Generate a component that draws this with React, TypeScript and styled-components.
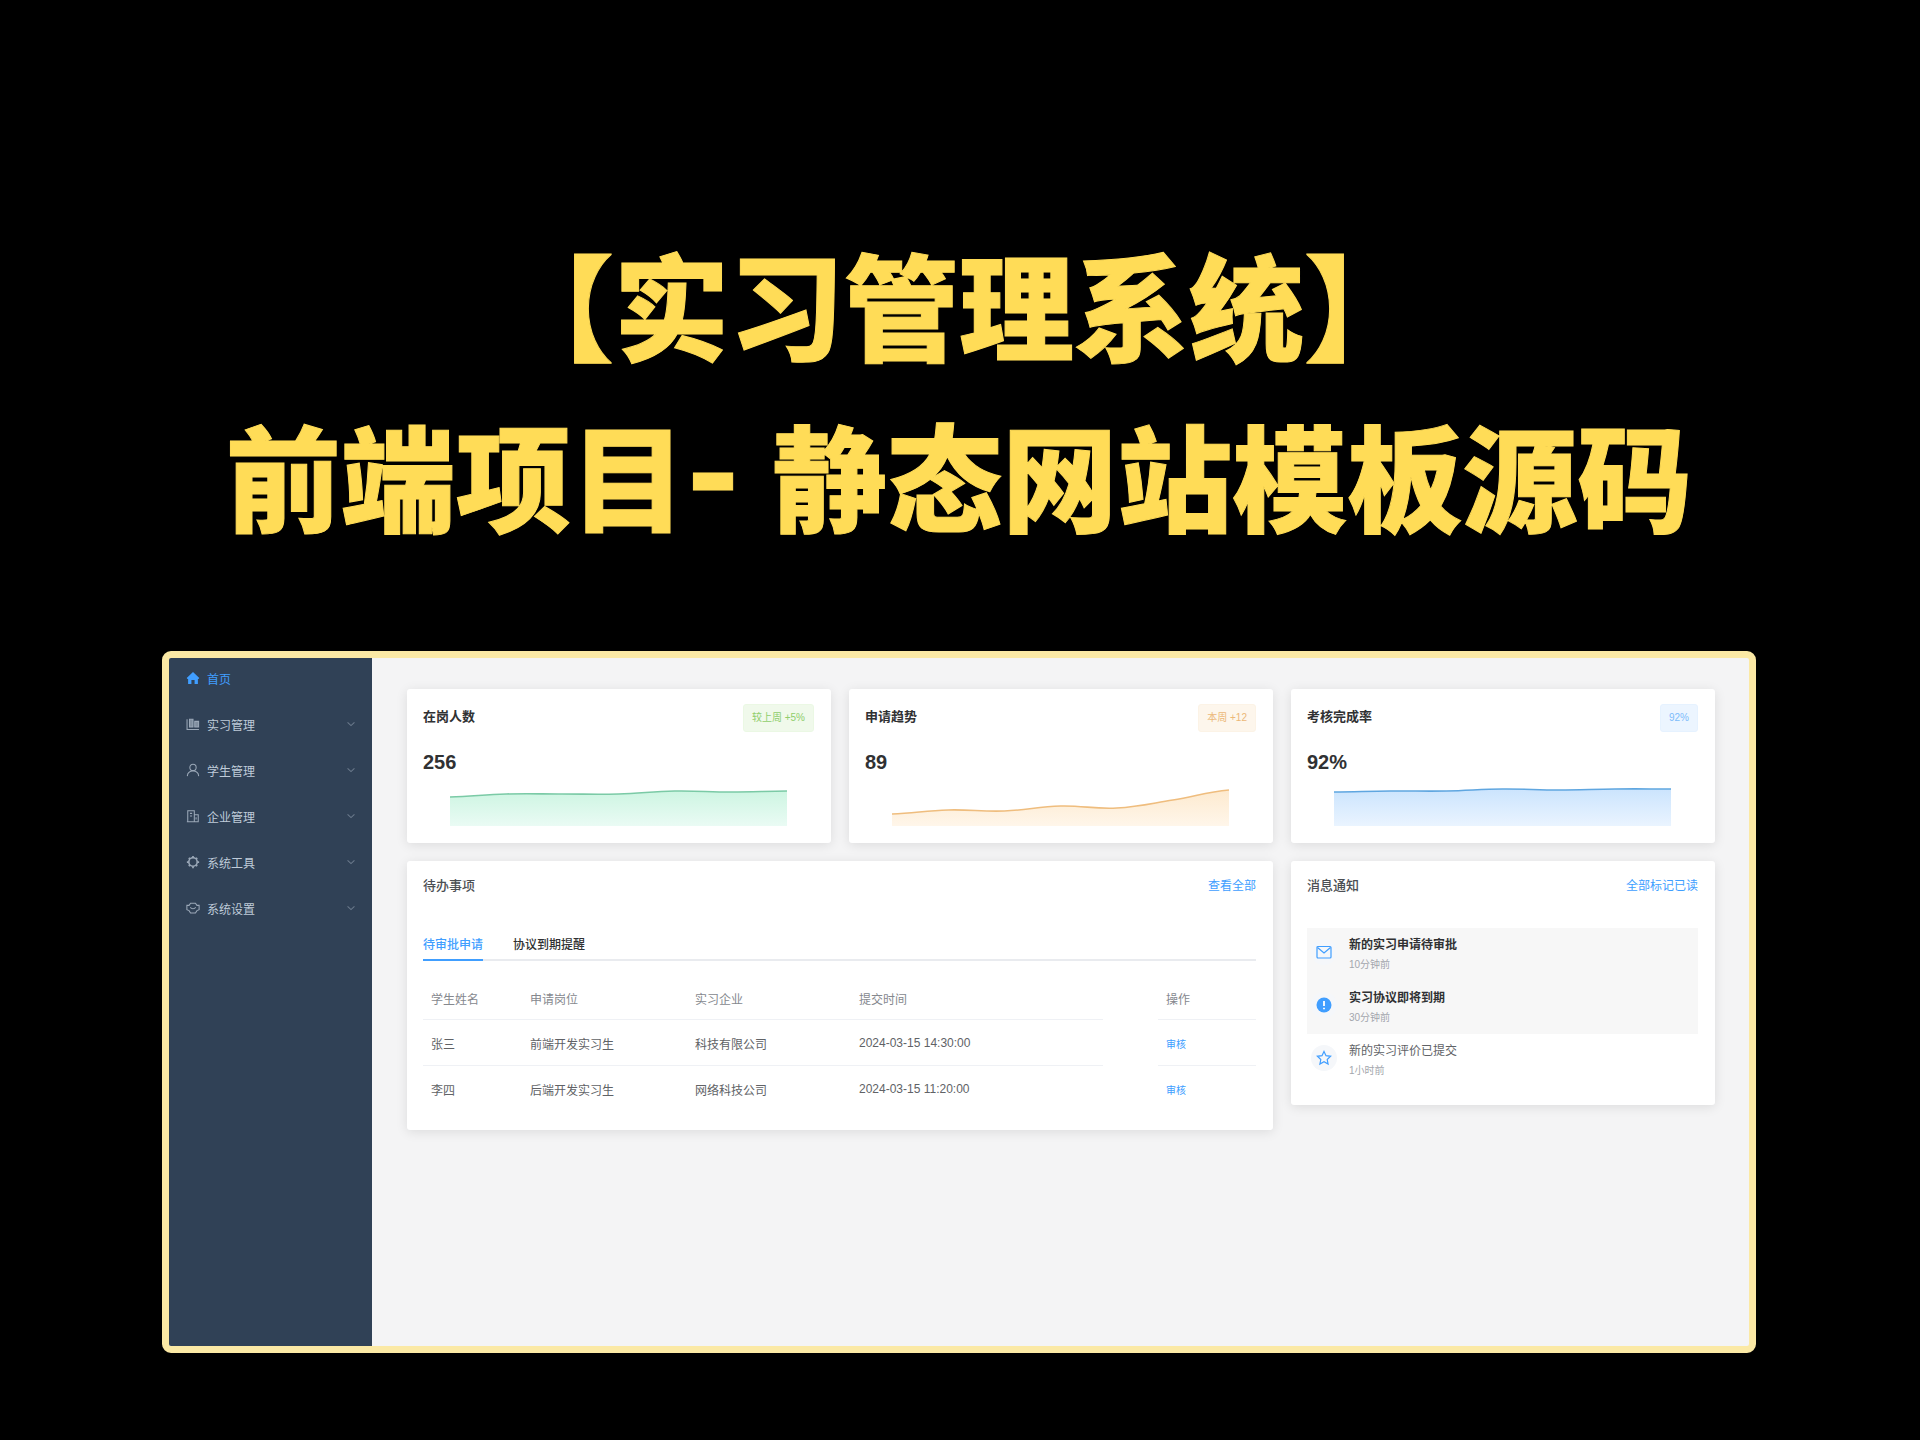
import React, { useId } from 'react';
import styled, { createGlobalStyle, css } from 'styled-components';

const GlobalStyle = createGlobalStyle`
  *, *::before, *::after { box-sizing: border-box; }
  body {
    margin: 0;
    background: #000;
    font-family: "Liberation Sans", "Noto Sans CJK SC", sans-serif;
    font-size: 12px;
    color: #606266;
  }
  h1, h2, p, ul { margin: 0; padding: 0; }
  ul { list-style: none; }
  button { border: 0; padding: 0; background: none; font: inherit; color: inherit; cursor: pointer; }
`;

const Page = styled.div`
  min-height: 100vh;
  padding: 217px 164px 86px 162px;
  background: #000;
`;

const Headline = styled.h1`
  margin-bottom: 92px;
  color: #ffdc57;
  font-family: "Noto Sans CJK SC", sans-serif;
  font-size: 115px;
  font-weight: 900;
  line-height: 171px;
  text-align: center;
  white-space: nowrap;
  -webkit-text-stroke: 1px #ffdc57;
`;

const HeadlineRow = styled.span`
  display: flex;
  justify-content: center;
`;

const Dash = styled.span`
  padding-right: 32px;
  font-family: Inter, sans-serif;
`;

const Frame = styled.div`
  display: flex;
  min-height: 702px;
  border: 7px solid #fbe9a5;
  border-radius: 9px;
  background: #f4f4f5;
  overflow: hidden;
`;

const Sidebar = styled.nav`
  flex: 0 0 203px;
  padding: 4px 16px 4px 17px;
  background: #304156;
`;

const Menu = styled.ul`
  display: grid;
  gap: 14px;
`;

const MenuLink = styled.button<{ $active?: boolean }>`
  display: flex;
  align-items: center;
  gap: 7px;
  width: 100%;
  height: 32px;
  color: ${(p) => (p.$active ? '#409eff' : '#bfcbd9')};
  text-align: left;

  svg { flex: none; opacity: ${(p) => (p.$active ? 1 : 0.75)}; }
  svg:last-child:not(:first-child) { margin-left: auto; opacity: 0.4; }
`;

const Main = styled.main`
  flex: 1;
  display: grid;
  grid-template-columns: repeat(3, minmax(0, 1fr));
  align-content: start;
  align-items: start;
  gap: 18px;
  padding: 31px 34px 31px 35px;
`;

const Card = styled.section<{ $wide?: boolean }>`
  border-radius: 3px;
  background: #fff;
  box-shadow: 0 2px 12px rgba(0, 0, 0, 0.1);
  ${(p) => p.$wide && css`grid-column: span 2;`}
`;

const StatBody = styled.div`
  padding: 15px 17px 17px 16px;
`;

const StatHeader = styled.div`
  display: flex;
  align-items: flex-start;
  justify-content: space-between;
  height: 28px;
`;

const StatTitle = styled.h2`
  font-size: 13px;
  font-weight: 700;
  line-height: 26px;
  color: #303133;
`;

type Tone = 'green' | 'orange' | 'blue';

const tones: Record<Tone, { text: string; fill: string; edge: string; line: string; top: string; bottom: string }> = {
  green: { text: '#8fce6c', fill: '#f0f9eb', edge: '#ebf8e4', line: '#7bcaa6', top: '#cdf5e2', bottom: '#eafbf4' },
  orange: { text: '#ecb878', fill: '#fdf6ec', edge: '#fcf3e6', line: '#efbd7e', top: '#fdeacf', bottom: '#fff6ea' },
  blue: { text: '#7dbcfb', fill: '#ecf5ff', edge: '#e6f2ff', line: '#5fa6e0', top: '#cbe4fd', bottom: '#eaf4ff' },
};

const Tag = styled.span<{ $tone: Tone }>`
  padding: 0 8px;
  border: 1px solid ${(p) => tones[p.$tone].edge};
  border-radius: 3px;
  background: ${(p) => tones[p.$tone].fill};
  color: ${(p) => tones[p.$tone].text};
  font-size: 10px;
  line-height: 26px;
`;

const StatValue = styled.p`
  margin-top: 18px;
  color: #303133;
  font-size: 20px;
  font-weight: 700;
  line-height: 24px;
`;

const Chart = styled.svg`
  display: block;
  width: 100%;
  height: 52px;
  padding: 0 27px;
`;

const PanelHeader = styled.div`
  display: flex;
  align-items: center;
  justify-content: space-between;
  height: 47px;
  padding: 0 17px 0 16px;
`;

const PanelTitle = styled.h2`
  font-size: 13px;
  font-weight: 500;
  color: #4c4f54;
`;

const TextButton = styled.button<{ $small?: boolean }>`
  color: #409eff;
  font-size: ${(p) => (p.$small ? '10px' : '12px')};
`;

const PanelBody = styled.div`
  padding: 20px 17px 18px 16px;
`;

const Tabs = styled.div`
  display: flex;
  gap: 30px;
  height: 33px;
  margin-bottom: 15px;
  box-shadow: inset 0 -2px 0 #e9ebef;
`;

const Tab = styled.button<{ $active?: boolean }>`
  border-bottom: 2px solid ${(p) => (p.$active ? '#409eff' : 'transparent')};
  color: ${(p) => (p.$active ? '#409eff' : '#303133')};
  font-weight: 500;
`;

const Table = styled.table`
  width: 100%;
  border-collapse: collapse;
  table-layout: fixed;
`;

const cell = css<{ $inset?: boolean }>`
  padding: 0 8px;
  text-align: left;
  font-weight: 400;
  background: linear-gradient(#eff1f5, #eff1f5) left bottom / ${(p) => (p.$inset ? 'calc(100% - 55px)' : '100%')} 1px no-repeat;
`;

const HeadCell = styled.th<{ $inset?: boolean }>`
  ${cell}
  height: 44px;
  color: #85888e;
`;

const Cell = styled.td<{ $inset?: boolean }>`
  ${cell}
  height: 46px;
  tr:last-child > & { background: none; }
`;

const Col = styled.col<{ $w?: number }>`
  width: ${(p) => (p.$w ? `${p.$w}px` : 'auto')};
`;

const Notice = styled.li<{ $unread?: boolean }>`
  display: flex;
  align-items: flex-start;
  gap: 12px;
  height: 53px;
  padding: 7px 4px;
  background: ${(p) => (p.$unread ? '#f7f7f7' : 'transparent')};
  color: ${(p) => (p.$unread ? '#303133' : '#606266')};
  font-weight: ${(p) => (p.$unread ? 700 : 400)};
`;

const NoticeIcon = styled.span`
  display: grid;
  place-items: center;
  width: 26px;
  height: 26px;
  margin-top: 4px;
  border-radius: 50%;
  background: #f5f7fa;
  color: #409eff;
`;

const NoticeText = styled.div`
  display: grid;
  gap: 2px;
  line-height: 20px;
`;

const NoticeTime = styled.time`
  color: #a3a6ad;
  font-size: 10px;
  font-weight: 400;
  line-height: 16px;
`;

type IconName = 'home' | 'doc' | 'user' | 'office' | 'gear' | 'setting' | 'mail' | 'alert' | 'star' | 'down';

const shapes: Record<IconName, React.ReactNode> = {
  home: <path fill="currentColor" stroke="none" d="M8 1.2 15.2 8l-.9 1H13.6v5.8H9.8v-4.4H6.2v4.4H2.4V9h-.7l-.9-1z" />,
  doc: (
    <>
      <path d="M1.2 2.5v11.7H14.8" />
      <path fill="currentColor" fillOpacity=".75" d="M4 2.5h4v9H4zM10 5h4.4v6.5H10z" />
    </>
  ),
  user: (
    <>
      <circle cx="8" cy="5" r="3.6" />
      <path d="M1.5 15c.3-3.6 2.6-5.8 6.5-5.8s6.2 2.2 6.5 5.8" />
    </>
  ),
  office: (
    <>
      <path d="M2 14.5V2h7.5v12.5M9.5 6.5H14v8H1" />
      <path d="M4.5 5H7M4.5 8H7M11.5 9.5v2.5" />
    </>
  ),
  gear: (
    <>
      <circle cx="8" cy="8" r="4.8" strokeWidth="1.8" />
      <path d="M8 1v2M8 13v2M1 8h2M13 8h2M3.2 3.2l1.3 1.3M11.500 11.500l1.300 1.300M3.200 12.800l1.300-1.300M11.500 4.500l1.300-1.300" strokeWidth="2" />
    </>
  ),
  setting: (
    <>
      <path d="M5.2 2.5h5.6L12.5 5H15v5l-2.5 1-1.7 2.8H5.2L3.5 11 1 10V5h2.5z" />
      <path d="M5 7.2c1 2.3 5 2.3 6 0" />
    </>
  ),
  mail: (
    <>
      <rect x="1" y="2.5" width="14" height="11.5" rx="1" />
      <path d="m1.5 3.5 6.5 5.5 6.5-5.5" />
    </>
  ),
  alert: (
    <>
      <circle cx="8" cy="8" r="7.5" fill="currentColor" stroke="none" />
      <path stroke="#fff" strokeWidth="1.8" d="M8 4v5M8 10.8v1.4" />
    </>
  ),
  star: <path d="m8 1.5 2 4.2 4.6.6-3.4 3.2.9 4.6L8 11.8l-4.1 2.3.9-4.6L1.400 6.300 6 5.700z" />,
  down: <path strokeWidth="1.8" d="m2.5 5.5 5.5 5 5.5-5" />,
};

function Icon({ name, size = 14 }: { name: IconName; size?: number }) {
  return (
    <svg width={size} height={size} viewBox="0 0 16 16" fill="none" stroke="currentColor" strokeWidth="1.2" aria-hidden="true">
      {shapes[name]}
    </svg>
  );
}

const menu: { icon: IconName; label: string }[] = [
  { icon: 'home', label: '首页' },
  { icon: 'doc', label: '实习管理' },
  { icon: 'user', label: '学生管理' },
  { icon: 'office', label: '企业管理' },
  { icon: 'gear', label: '系统工具' },
  { icon: 'setting', label: '系统设置' },
];

const stats: { title: string; tag: string; value: string; tone: Tone; points: number[] }[] = [
  { title: '在岗人数', tag: '较上周 +5%', value: '256', tone: 'green', points: [23, 20, 20, 20, 17, 18, 17] },
  { title: '申请趋势', tag: '本周 +12', value: '89', tone: 'orange', points: [40, 36, 37, 32, 34, 26, 16] },
  { title: '考核完成率', tag: '92%', value: '92%', tone: 'blue', points: [18, 17, 17, 15, 16, 15, 15] },
];

const rows = [
  ['张三', '前端开发实习生', '科技有限公司', '2024-03-15 14:30:00'],
  ['李四', '后端开发实习生', '网络科技公司', '2024-03-15 11:20:00'],
];

const notices: { icon: IconName; text: string; time: string; unread: boolean }[] = [
  { icon: 'mail', text: '新的实习申请待审批', time: '10分钟前', unread: true },
  { icon: 'alert', text: '实习协议即将到期', time: '30分钟前', unread: true },
  { icon: 'star', text: '新的实习评价已提交', time: '1小时前', unread: false },
];

function curve(points: number[], step: number) {
  return points
    .map((y, i) => {
      if (i === 0) return `M0 ${y}`;
      const before = points[i - 2] ?? points[i - 1];
      const after = points[i + 1] ?? y;
      const c1 = points[i - 1] + (y - before) / 5;
      const c2 = y - (after - points[i - 1]) / 5;
      return `C${(i - 0.6) * step} ${c1} ${(i - 0.4) * step} ${c2} ${i * step} ${y}`;
    })
    .join(' ');
}

function Trend({ points, tone }: { points: number[]; tone: Tone }) {
  const id = useId();
  const line = curve(points, 56);
  const { top, bottom, line: stroke } = tones[tone];
  return (
    <Chart viewBox="0 0 336 52" preserveAspectRatio="none" aria-hidden="true">
      <defs>
        <linearGradient id={id} x1="0" y1="0" x2="0" y2="1">
          <stop offset="0" stopColor={top} />
          <stop offset="1" stopColor={bottom} />
        </linearGradient>
      </defs>
      <path d={`${line} V52 H0 Z`} fill={`url(#${id})`} />
      <path d={line} fill="none" stroke={stroke} strokeWidth="1.6" />
    </Chart>
  );
}

export default function App() {
  return (
    <>
      <GlobalStyle />
      <Page>
        <Headline>
          <HeadlineRow>【实习管理系统】</HeadlineRow>
          <HeadlineRow>
            前端项目<Dash>-</Dash>静态网站模板源码
          </HeadlineRow>
        </Headline>
        <Frame>
          <Sidebar>
            <Menu>
              {menu.map((item, i) => (
                <li key={item.label}>
                  <MenuLink $active={i === 0}>
                    <Icon name={item.icon} />
                    <span>{item.label}</span>
                    {i > 0 && <Icon name="down" size={10} />}
                  </MenuLink>
                </li>
              ))}
            </Menu>
          </Sidebar>
          <Main>
            {stats.map((s) => (
              <Card key={s.title}>
                <StatBody>
                  <StatHeader>
                    <StatTitle>{s.title}</StatTitle>
                    <Tag $tone={s.tone}>{s.tag}</Tag>
                  </StatHeader>
                  <StatValue>{s.value}</StatValue>
                  <Trend points={s.points} tone={s.tone} />
                </StatBody>
              </Card>
            ))}
            <Card $wide>
              <PanelHeader>
                <PanelTitle>待办事项</PanelTitle>
                <TextButton>查看全部</TextButton>
              </PanelHeader>
              <PanelBody>
                <Tabs role="tablist">
                  <Tab role="tab" aria-selected="true" $active>待审批申请</Tab>
                  <Tab role="tab" aria-selected="false">协议到期提醒</Tab>
                </Tabs>
                <Table>
                  <colgroup>
                    <Col $w={99} />
                    <Col $w={165} />
                    <Col $w={164} />
                    <Col />
                    <Col $w={98} />
                  </colgroup>
                  <thead>
                    <tr>
                      <HeadCell>学生姓名</HeadCell>
                      <HeadCell>申请岗位</HeadCell>
                      <HeadCell>实习企业</HeadCell>
                      <HeadCell $inset>提交时间</HeadCell>
                      <HeadCell>操作</HeadCell>
                    </tr>
                  </thead>
                  <tbody>
                    {rows.map((r) => (
                      <tr key={r[0]}>
                        {r.map((value, i) => (
                          <Cell key={value} $inset={i === 3}>{value}</Cell>
                        ))}
                        <Cell><TextButton $small>审核</TextButton></Cell>
                      </tr>
                    ))}
                  </tbody>
                </Table>
              </PanelBody>
            </Card>
            <Card>
              <PanelHeader>
                <PanelTitle>消息通知</PanelTitle>
                <TextButton>全部标记已读</TextButton>
              </PanelHeader>
              <PanelBody>
                <ul>
                  {notices.map((n) => (
                    <Notice key={n.text} $unread={n.unread}>
                      <NoticeIcon><Icon name={n.icon} size={16} /></NoticeIcon>
                      <NoticeText>
                        <span>{n.text}</span>
                        <NoticeTime>{n.time}</NoticeTime>
                      </NoticeText>
                    </Notice>
                  ))}
                </ul>
              </PanelBody>
            </Card>
          </Main>
        </Frame>
      </Page>
    </>
  );
}
